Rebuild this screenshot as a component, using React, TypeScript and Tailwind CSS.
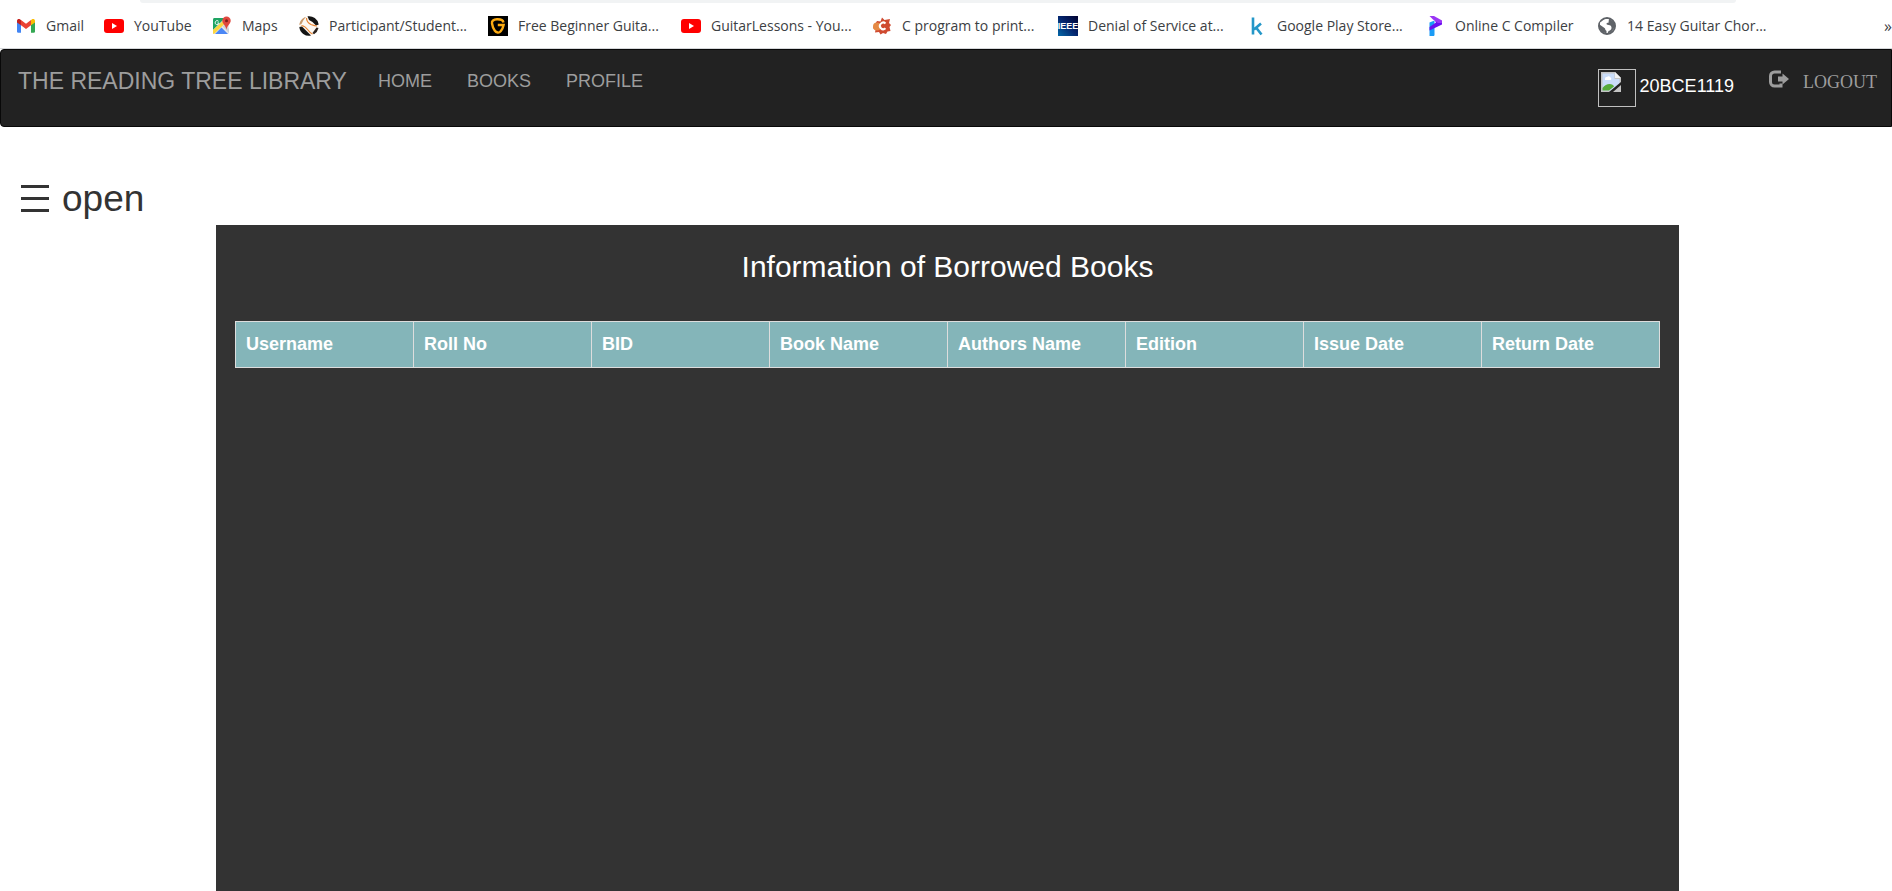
import type { ReactNode } from "react";

function GmailIcon() {
  return (
    <svg viewBox="0 0 20 20" className="size-5">
      <path d="M1 5v10.500c0 .8.500 1.200 1.200 1.200H5V8.500z" fill="#4285f4" />
      <path d="M19 5v10.500c0 .8-.5 1.200-1.200 1.200H15V8.500z" fill="#34a853" />
      <path d="M5 4v5.300l5 3.700 5-3.700V4l-5 3.700z" fill="#ea4335" />
      <path d="M1 4.800C1 3 3 2.500 4.200 3.400L5 4v5.300L1 6.400z" fill="#c5221f" />
      <path d="M19 4.800c0-1.800-2-2.300-3.200-1.400L15 4v5.300l4-2.900z" fill="#fbbc04" />
    </svg>
  );
}

function YouTubeIcon() {
  return (
    <svg viewBox="0 0 20 20" className="size-5">
      <rect x="0" y="3" width="20" height="14" rx="3" fill="#f00" />
      <path d="M8 7v6l5-3z" fill="#fff" />
    </svg>
  );
}

function MapsIcon() {
  return (
    <svg viewBox="0 0 20 20" className="size-5">
      <rect x="1" y="2" width="16" height="16" rx="1.500" fill="#e8eaed" />
      <path d="M2.500 2H13L1 14V3.500C1 2.600 1.600 2 2.500 2z" fill="#1fa463" />
      <path d="M1 14L12 4l1.500 3L2 18c-.6 0-1-.5-1-1z" fill="#fcd53f" />
      <path d="M3 18l6.500-6.500L16 18z" fill="#4b87f5" />
      <path d="M10.500 10.500L13 8l4 5v4z" fill="#cfd3d8" />
      <path d="M6.600 5.300a2 2 0 1 0 .5 1.700H5.300" fill="none" stroke="#fff" strokeWidth="0.900" />
      <path d="M14.500.5a4.200 4.200 0 0 1 4.200 4.200c0 3-3.600 4.600-4.200 9-.6-4.400-4.200-6-4.200-9A4.200 4.200 0 0 1 14.500.5z" fill="#e0483e" />
      <circle cx="14.500" cy="4.700" r="1.500" fill="#7c1f1a" />
    </svg>
  );
}

function SpokenIcon() {
  return (
    <svg viewBox="0 0 20 20" className="size-5">
      <circle cx="10" cy="10" r="9.800" fill="#fdf8f2" />
      <path d="M8.500.3a9.800 9.800 0 0 1 11.200 8.200L17 9.500 13.500 6 10 4z" fill="#141414" />
      <path d="M.3 11L3 10.500 6.500 14l5.500 5.600A9.800 9.800 0 0 1 .3 11z" fill="#141414" />
      <path d="M17.500 11.500l2 .5a9.800 9.800 0 0 1-4.500 6.300L13.500 17z" fill="#2a211c" />
      <path d="M.3 9C.8 5 3.500 1.800 7 .8L4.500 4 2.500 8z" fill="#c99a6c" />
      <path d="M2.500 9.500c3 .5 5 2.500 6.500 4.500 1 1.500 2.500 3 4.500 4" fill="none" stroke="#e88432" strokeWidth="1.200" />
      <path d="M7.500 2c0 3 1.500 5 4.500 6.500 2 .8 4 1.500 6 1.500" fill="none" stroke="#e88432" strokeWidth="1.200" />
    </svg>
  );
}

function GuitarIcon() {
  return (
    <svg viewBox="0 0 20 20" className="size-5">
      <rect width="20" height="20" fill="#000" />
      <path
        d="M15.500 6.500C15 4 12 3.200 9 3.300 5.500 3.400 3.500 5 4 7.500c.4 2.500 1.200 5 2.700 7 1.600 2.400 4.300 2.800 6 .8 1.400-1.700 2.400-3.800 2.900-6.300H9.800"
        fill="none"
        stroke="#fdab12"
        strokeWidth="2.400"
      />
    </svg>
  );
}

function CProgramIcon() {
  return (
    <svg viewBox="0 0 20 20" className="size-5">
      <path d="M5 5l3.500.5L10 1.500l2.500 2.500L18 3l-1 4 2 2-1.500 2 1 4-3 .5L14 18l-3-1-2.500 1.500L7 16l-4 .5L3.500 14 1 12l1.500-3z" fill="#cf4a30" />
      <circle cx="5" cy="10.500" r="4" fill="#e58a45" />
      <path d="M13.500 7.500a3.300 3.300 0 1 0 0 4.800" fill="none" stroke="#fff" strokeWidth="2" />
    </svg>
  );
}

function IeeeIcon() {
  return (
    <svg viewBox="0 0 20 20" className="size-5">
      <defs>
        <linearGradient id="ieee" x1="0" y1="1" x2="1" y2="0">
          <stop offset="0" stopColor="#0468a8" />
          <stop offset="0.500" stopColor="#04266f" />
          <stop offset="1" stopColor="#020230" />
        </linearGradient>
      </defs>
      <rect width="20" height="20" fill="url(#ieee)" />
      <text x="10" y="13" textAnchor="middle" fill="#fff" className="font-['Liberation_Sans_Narrow','Liberation_Sans',sans-serif] text-[9px] font-bold">
        IEEE
      </text>
    </svg>
  );
}

function KIcon() {
  return (
    <svg viewBox="0 0 20 20" className="size-5">
      <path d="M6 1.500v17M14 7.500l-7 6M9 11.500l5.500 7" fill="none" stroke="#2497c8" strokeWidth="2.600" />
    </svg>
  );
}

function CompilerIcon() {
  return (
    <svg viewBox="0 0 20 20" className="size-5">
      <path d="M4.500 6.500l5-2V19l-.5 1H4.500z" fill="#1a9cf6" />
      <path d="M9 3l8 2v3.500L4.500 14.500V11L11 6.500z" fill="#6a0ff0" />
      <path d="M4.500 0H9l8 4.500V7L13 7 8 3.500z" fill="#9a35f5" />
    </svg>
  );
}

function GlobeIcon() {
  return (
    <svg viewBox="0 0 20 20" className="size-5">
      <circle cx="10" cy="10" r="8" fill="none" stroke="#5f6368" strokeWidth="2" />
      <path d="M3 6.500L9 3h3l-1 2.500c-2 0-3 .8-3 2s1 1.500 2.500 1.500 2.500 1 2.500 2.500-.5 2-2 2.500L9.500 17 5 15l2.500-2.500L3 9z" fill="#fff" />
      <path d="M12 2.500l5 3.500.8 5-3.300 5-4 1.800 1-2.800c2-.5 3-1.500 3-3.200s-1-2.500-3-2.800c-1.500-.2-2-.6-2-1.300s.8-1 2-1z" fill="#5f6368" />
      <path d="M2.500 8.500l5 3.500c1 .8.500 1.500 1 2l1 1v2.500L5 16l-3-4z" fill="#5f6368" />
    </svg>
  );
}

const bookmarks: { label: string; icon: ReactNode }[] = [
  { label: "Gmail", icon: <GmailIcon /> },
  { label: "YouTube", icon: <YouTubeIcon /> },
  { label: "Maps", icon: <MapsIcon /> },
  { label: "Participant/Student...", icon: <SpokenIcon /> },
  { label: "Free Beginner Guita...", icon: <GuitarIcon /> },
  { label: "GuitarLessons - You...", icon: <YouTubeIcon /> },
  { label: "C program to print...", icon: <CProgramIcon /> },
  { label: "Denial of Service at...", icon: <IeeeIcon /> },
  { label: "Google Play Store...", icon: <KIcon /> },
  { label: "Online C Compiler", icon: <CompilerIcon /> },
  { label: "14 Easy Guitar Chor...", icon: <GlobeIcon /> },
];

const navLinks = ["HOME", "BOOKS", "PROFILE"];

const columns = ["Username", "Roll No", "BID", "Book Name", "Authors Name", "Edition", "Issue Date", "Return Date"];

function BookmarksBar() {
  return (
    <div className="border-b border-[#d5d7da] bg-white font-['Open_Sans','Noto_Sans',sans-serif]">
      <div className="mr-[156px] ml-[140px] h-[3px] rounded-b-lg bg-[#f1f3f4]" />
      <div className="flex h-[45px] items-center justify-between pl-4">
        <ul className="grid grid-cols-[88px_108px_87px_189px_193px_191px_186px_189px_178px_172px_180px]">
          {bookmarks.map((b) => (
            <li key={b.label}>
              <a href="#" className="flex items-center gap-[10px] text-[14px] leading-5 whitespace-nowrap text-[#3c4043]">
                {b.icon}
                <span>{b.label}</span>
              </a>
            </li>
          ))}
        </ul>
        <button type="button" aria-label="More bookmarks" className="text-[16px] leading-5 text-[#3c4043]">
          »
        </button>
      </div>
    </div>
  );
}

function BrokenImage() {
  return (
    <span className="block size-[38px] border border-[#c0c0c0] p-[2px]">
      <svg viewBox="0 0 20 20" className="size-5">
        <path d="M0 0h14l6 6v14H0z" fill="#c3c3c3" />
        <path d="M1.500 1.500h12v5.500h5V12L10 18.500H1.500z" fill="#c9dcf8" />
        <path d="M4 7a1.800 1.800 0 0 1 2-2 2 2 0 0 1 3.500.5A1.400 1.400 0 0 1 9.500 8H4z" fill="#fff" />
        <path d="M1.500 18.500v-2.500c2-2.500 4.500-4 7-4s4 1 4.500 2.500l-5 4z" fill="#57ab3a" />
        <path d="M14 0l6 6h-6z" fill="#f1f1f1" />
        <path d="M20 10v3l-8 7H8z" fill="#222" />
      </svg>
    </span>
  );
}

function LogoutIcon() {
  return (
    <svg viewBox="0 0 20 18" className="mt-px h-[18px] w-5">
      <path d="M12 2H5.500a4 4 0 0 0-4 4v6a4 4 0 0 0 4 4H12v-2.500" fill="none" stroke="#9d9d9d" strokeWidth="3" />
      <path d="M9 6.500h4.500V3.500L20 9l-6.500 5.500v-3H9z" fill="#9d9d9d" />
    </svg>
  );
}

function Navbar() {
  return (
    <nav className="flex h-[78px] items-start justify-between rounded-l border border-[#080808] bg-[#222] pr-[14px] pl-[17px] text-[#9d9d9d]">
      <div className="flex pt-[18px]">
        <a href="#" className="text-[23px] leading-[26px]">
          THE READING TREE LIBRARY
        </a>
        <ul className="ml-[31px] flex gap-[35px] text-[18px] leading-[26px]">
          {navLinks.map((l) => (
            <li key={l}>
              <a href="#">{l}</a>
            </li>
          ))}
        </ul>
      </div>
      <div className="flex gap-[35px] pt-[19px]">
        <a href="#" className="flex items-start gap-1 text-[18px] leading-[34px] text-white">
          <BrokenImage />
          <span>20BCE1119</span>
        </a>
        <a href="#" className="flex items-start gap-[14px] font-['Liberation_Serif',serif] text-[18px] leading-[26px]">
          <LogoutIcon />
          <span>LOGOUT</span>
        </a>
      </div>
    </nav>
  );
}

export default function App() {
  return (
    <div className="flex min-h-screen flex-col bg-white font-['Liberation_Sans',Arial,sans-serif] text-[#333]">
      <BookmarksBar />
      <Navbar />
      <main className="flex grow flex-col pt-[46px] pl-[3px]">
        <button type="button" className="ml-[13px] flex items-center gap-[10px] self-start text-[37px] leading-[52px]">
          <svg viewBox="0 0 36 30" className="h-[30px] w-9" fill="#333">
            <path d="M5 1h28v3H5zM5 13h28v3H5zM5 25h28v3H5z" />
          </svg>
          <span>open</span>
        </button>
        <section className="mx-auto w-full max-w-[1463px] grow bg-[#333] px-[19px] pt-6 text-white">
          <h1 className="text-center text-[30px] leading-[36px]">Information of Borrowed Books</h1>
          <table className="mt-9 w-full table-fixed border-collapse">
            <thead>
              <tr className="bg-[#84b5b9]">
                {columns.map((c) => (
                  <th key={c} scope="col" className="border border-[#ddd] p-[10px] text-left text-[18px] leading-[25px] font-bold">
                    {c}
                  </th>
                ))}
              </tr>
            </thead>
          </table>
        </section>
      </main>
    </div>
  );
}
